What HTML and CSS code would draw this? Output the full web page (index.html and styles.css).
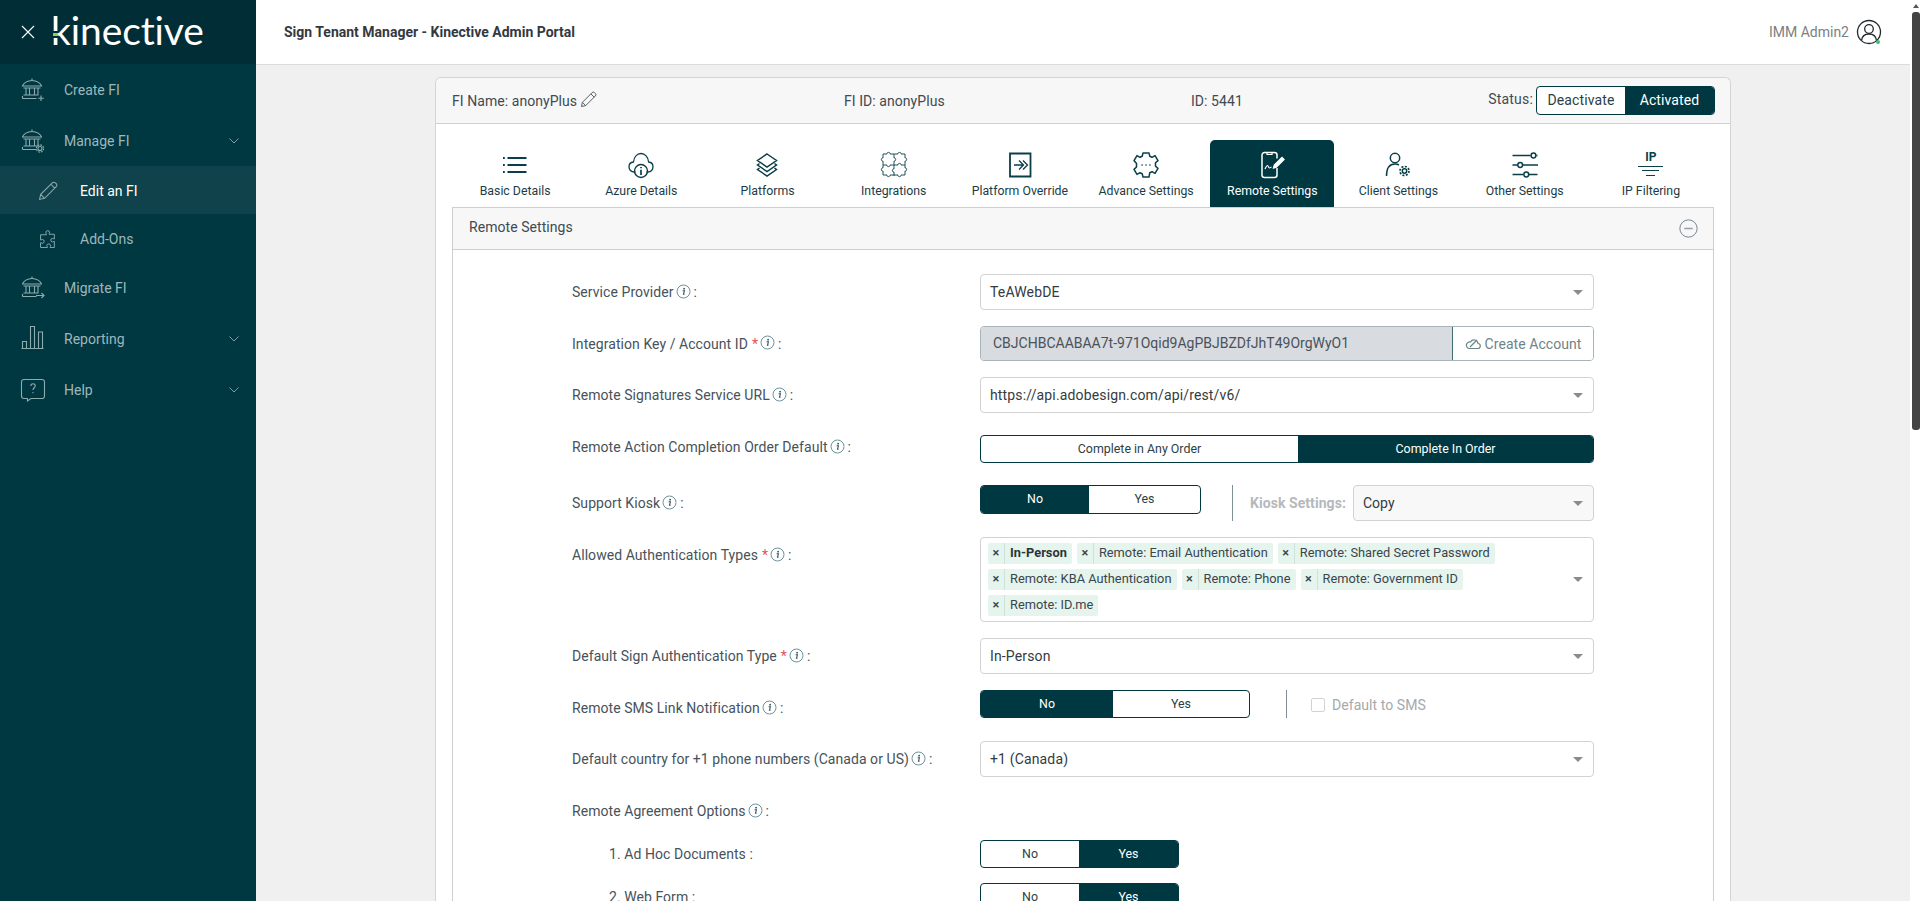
FILE: index.html
```html
<!DOCTYPE html>
<html lang="en">
<head>
<meta charset="utf-8">
<title>Sign Tenant Manager - Kinective Admin Portal</title>
<link rel="stylesheet" href="styles.css">
</head>
<body>
<svg class="defs" width="0" height="0" aria-hidden="true">
  <defs>
    <g id="bank">
      <path d="M1.500 8c.8-3 5-5.500 9.500-5.500S19.700 5 20.500 8zM2.500 10h17M5 10v6.500M8.500 10v6.500M13.500 10v6.500M17 10v6.500M2.500 17h15M1.500 20.500V18M1.500 20.500h14"/>
      <path d="M11 .5v2"/>
    </g>
    <symbol id="info" viewBox="0 0 15 15">
      <circle cx="7.500" cy="7.500" r="6.500" fill="none" stroke="#6d929b" stroke-width="1"/>
      <circle cx="8.100" cy="4.700" r=".9" fill="#33515a"/>
      <path d="M6.600 6.800h1.800l-.9 3.300h1" fill="none" stroke="#33515a" stroke-width="1.100"/>
    </symbol>
    <path id="pencil" d="M2.500 17.500l1-4.500L13.800 2.700a1.900 1.900 0 0 1 2.700 0l.8.800a1.900 1.900 0 0 1 0 2.700L7 16.500zM3.500 13L7 16.500M12.500 4l3.500 3.500"/>
  </defs>
</svg>
<div class="app">
  <aside class="sidebar">
    <div class="brand">
      <svg class="close" viewBox="0 0 14 14"><path d="M1 1l12 12M13 1L1 13"/></svg>
      <span class="logo">kinective<i class="logo-dot"></i></span>
    </div>
    <nav class="nav">
      <a class="nav-item">
        <svg class="nav-icon" viewBox="0 0 24 24"><use href="#bank"/><path d="M20 17.500v5.500M17.200 20.300h5.600"/></svg>
        <span class="nav-text">Create FI</span>
      </a>
      <a class="nav-item">
        <svg class="nav-icon" viewBox="0 0 24 24"><use href="#bank"/><circle cx="19" cy="19.500" r="2"/><circle cx="19" cy="19.500" r="3.600" stroke-dasharray="1.800 1"/></svg>
        <span class="nav-text">Manage FI</span>
        <svg class="chev" viewBox="0 0 10 6"><path d="M.5.500L5 5 9.500.500"/></svg>
      </a>
      <a class="nav-sub active">
        <svg class="sub-icon" viewBox="2 2 16 16"><use href="#pencil"/></svg>
        <span>Edit an FI</span>
      </a>
      <a class="nav-sub">
        <svg class="sub-icon" viewBox="2.500 .5 15 17"><path d="M8 2.500c0-1.800 3.500-1.800 3.500 0 0 1-.5 1.300-.5 2h5v4.500c-.8 0-1.200-.6-2-.6-1.800 0-1.800 3.400 0 3.400.8 0 1.200-.6 2-.6V17h-4c0-.8.500-1.200.5-2 0-1.800-3.600-1.800-3.600 0 0 .8.600 1.200.6 2H3v-4.500c.8 0 1.200.5 2 .5 1.800 0 1.800-3.600 0-3.600-.8 0-1.200.6-2 .6V5h5.500c0-.9-.5-1.500-.5-2.500z"/></svg>
        <span>Add-Ons</span>
      </a>
      <a class="nav-item">
        <svg class="nav-icon" viewBox="0 0 24 24"><use href="#bank"/><path d="M15 19.500h8M20.500 17l2.500 2.500-2.500 2.500"/></svg>
        <span class="nav-text">Migrate FI</span>
      </a>
      <a class="nav-item">
        <svg class="nav-icon" viewBox="0 0 24 24"><path d="M.5 22.500h22M1.500 22V15.500h4V22M9.500 22V.5h4V22M17.500 22V6h4V22" transform="translate(0 -1)"/></svg>
        <span class="nav-text">Reporting</span>
        <svg class="chev" viewBox="0 0 10 6"><path d="M.5.500L5 5 9.500.500"/></svg>
      </a>
      <a class="nav-item">
        <svg class="nav-icon" viewBox="0 0 24 24"><path d="M3 1.500h18a2.500 2.500 0 0 1 2.500 2.500v14a2.500 2.500 0 0 1-2.500 2.500H10l-3.500 2.500V20.500H3A2.500 2.500 0 0 1 .5 18V4A2.500 2.500 0 0 1 3 1.500z"/><path d="M9.800 8c0-3 4.400-3 4.400 0 0 1.800-2.200 1.800-2.200 4M12 14v1.200"/></svg>
        <span class="nav-text">Help</span>
        <svg class="chev" viewBox="0 0 10 6"><path d="M.5.500L5 5 9.500.500"/></svg>
      </a>
    </nav>
  </aside>

  <div class="main">
    <header class="topbar">
      <h1 class="title">Sign Tenant Manager - Kinective Admin Portal</h1>
      <div class="user">
        <span class="user-name">IMM Admin2</span>
        <svg class="user-icon" viewBox="0 0 26 26"><circle cx="13" cy="13" r="11.500"/><circle cx="13" cy="10" r="4.300"/><path d="M5.500 21.500c.5-4 3.500-6.500 7.500-6.500s7 2.500 7.500 6.500"/><circle class="user-dot" cx="22" cy="23" r="2"/></svg>
      </div>
    </header>

    <div class="content">
      <section class="card">
        <div class="card-head">
          <div class="fi-name">FI Name: anonyPlus <svg class="head-pencil" viewBox="2 2 16 16"><use href="#pencil"/></svg></div>
          <div>FI ID: anonyPlus</div>
          <div>ID: 5441</div>
          <div class="status">
            <span class="status-label">Status:</span>
            <div class="toggle toggle-status"><span class="tbtn">Deactivate</span><span class="tbtn on">Activated</span></div>
          </div>
        </div>

        <div class="card-body">
          <div class="tabs">
            <a class="tab">
              <svg class="tab-icon" viewBox="0 0 28 28"><path d="M6.500 7h19M6.500 14h19M6.500 21h19" stroke-width="1.800"/><path d="M2 7h1.800M2 14h1.800M2 21h1.800" stroke-width="1.800"/></svg>
              <span>Basic Details</span>
            </a>
            <a class="tab">
              <svg class="tab-icon" viewBox="0 0 28 28"><path d="M8.500 21H7.200C4 21 2 18.500 2 16c0-2.800 2-4.800 4.500-5C7 6 10 2.500 14 2.500s7.200 3.500 7.600 8.500c2.500.2 4.400 2.200 4.400 5 0 2.500-2 5-5 5h-1.500" stroke-width="1.300"/><circle cx="14" cy="20" r="6.500" stroke-width="1.400"/><path d="M14 18.700V24M14 16v1.300" stroke-width="1.700"/></svg>
              <span>Azure Details</span>
            </a>
            <a class="tab">
              <svg class="tab-icon" viewBox="0 0 28 28"><path d="M14 3l9.500 6.500L14 16 4.500 9.500zM6.500 12.500l-2 1.500L14 20.500 23.500 14l-2-1.500M6.500 17l-2 1.500L14 25l9.500-6.500-2-1.500" stroke-width="1.500"/></svg>
              <span>Platforms</span>
            </a>
            <a class="tab">
              <svg class="tab-icon tab-thin" viewBox="0 0 28 28"><path d="M3 3h4c-.6-2.200 3.600-2.200 3 0h4h4c-.6-2.200 3.600-2.200 3 0h4v4c2.200-.6 2.200 3.600 0 3v3h0v4c2.200-.6 2.200 3.600 0 3v4h-4c.6 2.200-3.600 2.200-3 0h-4h-4c.6 2.200-3.600 2.200-3 0H3v-4c-2.200.6-2.200-3.600 0-3v-4h0v-3c-2.200.6-2.200-3.600 0-3z"/><path d="M14 3v4c2.200-.6 2.200 3.600 0 3v4h0v4c-2.200-.6-2.200 3.600 0 3v4M3 14h4c-.6 2.200 3.600 2.200 3 0h4h4c-.6-2.200 3.600-2.200 3 0h4"/></svg>
              <span>Integrations</span>
            </a>
            <a class="tab">
              <svg class="tab-icon" viewBox="0 0 28 28"><path d="M4 2.500h20.500v23H4z" stroke-width="1.800"/><path d="M8 14h9M13 9.500l4.500 4.500-4.500 4.500M17 9.500l4.500 4.500-4.500 4.500" stroke-width="1.300"/></svg>
              <span>Platform Override</span>
            </a>
            <a class="tab">
              <svg class="tab-icon" viewBox="0 0 28 28"><path d="M11 2h6l.8 3.300 2.200 1 3-1.700 3 5-2.500 2.200v3.400L26 17.400l-3 5-3-1.700-2.200 1L17 26h-6l-.8-3.300-2.200-1-3 1.700-3-5L4.500 16v-3.400L2 9.600l3-5 3 1.700 2.200-1z" stroke-width="1.500" stroke-linejoin="round"/><path d="M9.500 14h1.200M13.400 14h1.200M17.300 14h1.200" stroke-width="1.300"/></svg>
              <span>Advance Settings</span>
            </a>
            <a class="tab tab-active">
              <svg class="tab-icon" viewBox="0 0 28 28"><path d="M19 7.500V4a2.500 2.500 0 0 0-2.500-2.500h-10A2.500 2.500 0 0 0 4 4v20a2.500 2.500 0 0 0 2.500 2.500h10A2.500 2.500 0 0 0 19 24v-7" stroke-width="1.500"/><path d="M9 2v1.500h5V2" stroke-width="1.200"/><path d="M7 18c1-2 1.500-3.500 2.500-3.500 1 0 .8 2.500 2 2.500.8 0 1-.8 2-.8" stroke-width="1.200"/><path class="pen-fill" d="M15.500 17l.8-3L24 6.500l2 2-7.600 7.700z" stroke-width="1.300"/></svg>
              <span>Remote Settings</span>
            </a>
            <a class="tab">
              <svg class="tab-icon" viewBox="0 0 28 28"><circle cx="11" cy="7" r="4.700" stroke-width="1.500"/><path d="M2.500 25c0-8 3-12 8.500-12 1.500 0 2.800.3 4 1" stroke-width="1.500"/><circle cx="20.500" cy="20" r="2.200" stroke-width="1.500"/><circle cx="20.500" cy="20" r="4.500" stroke-width="1.700" stroke-dasharray="2 1.500"/></svg>
              <span>Client Settings</span>
            </a>
            <a class="tab">
              <svg class="tab-icon" viewBox="0 0 28 28"><path d="M1.500 4.500h18M25.500 4.500h1M1.500 14h5M12 14h15M1.500 23.500h11M18 23.500h8.500" stroke-width="1.700"/><circle cx="22.500" cy="4.500" r="2.400" stroke-width="1.500"/><circle cx="9.200" cy="14" r="2.400" stroke-width="1.500"/><circle cx="15.300" cy="23.500" r="2.400" stroke-width="1.500"/></svg>
              <span>Other Settings</span>
            </a>
            <a class="tab">
              <div class="ip-icon"><b class="ip-text">IP</b><i class="ip-l1"></i><i class="ip-l2"></i><i class="ip-l3"></i></div>
              <span>IP Filtering</span>
            </a>
          </div>

          <div class="panel">
            <div class="panel-head">
              <span>Remote Settings</span>
              <svg class="collapse" viewBox="0 0 20 20"><circle cx="10" cy="10" r="9.100"/><path class="collapse-bar" d="M5.500 10h9"/></svg>
            </div>
            <div class="panel-body">
              <div class="row">
                <div class="lbl">Service Provider<svg class="info"><use href="#info"/></svg> :</div>
                <div class="select"><span>TeAWebDE</span><i class="caret"></i></div>
              </div>
              <div class="row">
                <div class="lbl lbl-key">Integration Key / Account ID <em>*</em><svg class="info"><use href="#info"/></svg> :</div>
                <div class="keyfield">
                  <div class="key-value">CBJCHBCAABAA7t-971Oqid9AgPBJBZDfJhT49OrgWyO1</div>
                  <div class="key-btn">
                    <svg class="key-icon" viewBox="0 0 16 12"><path d="M4 10.500h8.500a2.500 2.500 0 0 0 .5-5A4 4 0 0 0 5.500 4 3.300 3.300 0 0 0 4 10.500zM5 9l7-7"/></svg>
                    Create Account
                  </div>
                </div>
              </div>
              <div class="row">
                <div class="lbl">Remote Signatures Service URL<svg class="info"><use href="#info"/></svg> :</div>
                <div class="select"><span>https://api.adobesign.com/api/rest/v6/</span><i class="caret"></i></div>
              </div>
              <div class="row row-action">
                <div class="lbl">Remote Action Completion Order Default<svg class="info"><use href="#info"/></svg> :</div>
                <div class="toggle toggle-action"><span class="tbtn">Complete in Any Order</span><span class="tbtn on">Complete In Order</span></div>
              </div>
              <div class="row">
                <div class="lbl">Support Kiosk<svg class="info"><use href="#info"/></svg> :</div>
                <div class="inline">
                  <div class="toggle toggle-kiosk"><span class="tbtn on">No</span><span class="tbtn">Yes</span></div>
                  <i class="sep sep-kiosk"></i>
                  <span class="kiosk-label">Kiosk Settings:</span>
                  <div class="select select-kiosk"><span>Copy</span><i class="caret"></i></div>
                </div>
              </div>
              <div class="row">
                <div class="lbl">Allowed Authentication Types <em>*</em><svg class="info"><use href="#info"/></svg> :</div>
                <div class="tagbox">
                  <div class="tags">
                    <span class="tag"><i class="tag-x">×</i><b class="tag-text tag-strong">In-Person</b></span>
                    <span class="tag"><i class="tag-x">×</i><span class="tag-text">Remote: Email Authentication</span></span>
                    <span class="tag"><i class="tag-x">×</i><span class="tag-text">Remote: Shared Secret Password</span></span>
                    <span class="tag"><i class="tag-x">×</i><span class="tag-text">Remote: KBA Authentication</span></span>
                    <span class="tag"><i class="tag-x">×</i><span class="tag-text">Remote: Phone</span></span>
                    <span class="tag"><i class="tag-x">×</i><span class="tag-text">Remote: Government ID</span></span>
                    <span class="tag"><i class="tag-x">×</i><span class="tag-text">Remote: ID.me</span></span>
                  </div>
                  <i class="caret"></i>
                </div>
              </div>
              <div class="row">
                <div class="lbl">Default Sign Authentication Type <em>*</em><svg class="info"><use href="#info"/></svg> :</div>
                <div class="select"><span>In-Person</span><i class="caret"></i></div>
              </div>
              <div class="row row-sms">
                <div class="lbl">Remote SMS Link Notification<svg class="info"><use href="#info"/></svg> :</div>
                <div class="inline">
                  <div class="toggle toggle-sms"><span class="tbtn on">No</span><span class="tbtn">Yes</span></div>
                  <i class="sep sep-sms"></i>
                  <i class="check"></i>
                  <span class="check-label">Default to SMS</span>
                </div>
              </div>
              <div class="row">
                <div class="lbl">Default country for +1 phone numbers (Canada or US)<svg class="info"><use href="#info"/></svg> :</div>
                <div class="select"><span>+1 (Canada)</span><i class="caret"></i></div>
              </div>
              <div class="row row-tight">
                <div class="lbl">Remote Agreement Options<svg class="info"><use href="#info"/></svg> :</div>
              </div>
              <div class="row row-tight">
                <div class="lbl lbl-sub">1. Ad Hoc Documents :</div>
                <div class="toggle toggle-sub"><span class="tbtn">No</span><span class="tbtn on">Yes</span></div>
              </div>
              <div class="row row-tight">
                <div class="lbl lbl-sub">2. Web Form :</div>
                <div class="toggle toggle-sub"><span class="tbtn">No</span><span class="tbtn on">Yes</span></div>
              </div>
            </div>
          </div>
        </div>
      </section>
    </div>
  </div>

  <div class="scrollbar">
    <i class="scroll-up"></i>
    <i class="scroll-thumb"></i>
  </div>
</div>
</body>
</html>
```
FILE: styles.css
```css
* { box-sizing: border-box; }
html, body { margin: 0; height: 100%; overflow: hidden; }
body { font-family: Roboto, "Liberation Sans", sans-serif; font-size: 14px; color: #3f4a52; background: #f0f0f0; }
.defs { position: absolute; }
svg { display: block; }
em { font-style: normal; color: #e8505b; }

.app { display: flex; height: 901px; overflow: hidden; }

/* Sidebar */
.sidebar { width: 256px; flex: none; background: #003842; color: #9db7ba; }
.brand { height: 64px; background: #012d36; display: flex; align-items: center; padding-left: 21px; }
.close { width: 14px; height: 14px; fill: none; stroke: #fff; stroke-width: 1.1; }
.logo { position: relative; margin-left: 16px; margin-top: -4px; font-family: Lato, sans-serif; font-weight: 400; font-size: 39px; line-height: 40px; letter-spacing: -.1px; color: #fff; }
.logo-dot { position: absolute; left: 2px; top: 21px; width: 5px; height: 7px; background: #8fd14f; border-top: 2px solid #012d36; border-bottom: 2px solid #012d36; }
.nav-item { height: 51px; display: flex; align-items: center; padding-left: 21px; }
.nav-icon { width: 24px; height: 24px; flex: none; fill: none; stroke: #8dabaf; stroke-width: 1.1; overflow: visible; }
.nav-text { margin-left: 19px; flex: 1; }
.chev { width: 10px; height: 6px; flex: none; margin-right: 17px; fill: none; stroke: #7f9ea2; stroke-width: 1; }
.nav-sub { height: 48px; display: flex; align-items: center; padding: 2px 0 0 39px; }
.nav-sub.active { background: #0f424a; color: #fff; }
.sub-icon { width: 18px; height: 18px; flex: none; margin-right: 23px; fill: none; stroke: #8dabaf; stroke-width: .9; overflow: visible; }

/* Main */
.main { flex: 1; min-width: 0; display: flex; flex-direction: column; }
.topbar { height: 65px; flex: none; background: #fff; border-bottom: 1px solid #dcdcdf; display: flex; align-items: center; justify-content: space-between; padding: 0 28px 1px 28px; }
.title { margin: 0; font-size: 14px; font-weight: 700; line-height: 18px; color: #33393f; }
.user { display: flex; align-items: center; gap: 7px; }
.user-name { color: #7b7f83; }
.user-icon { width: 26px; height: 26px; fill: none; stroke: #23282c; stroke-width: 1.300; overflow: visible; }
.user-dot { fill: #3fbf6f; stroke: none; }
.content { flex: 1; min-height: 0; padding: 12px 0 0 179px; overflow: hidden; }

/* Card */
.card { width: 1296px; background: #fff; border: 1px solid #d4d4d4; border-bottom: 0; border-radius: 6px 6px 0 0; letter-spacing: .06px; }
.card-head { height: 46px; background: #f7f7f7; border-bottom: 1px solid #d0d0d0; border-radius: 6px 6px 0 0; display: grid; grid-template-columns: 392px 347px 1fr auto; align-items: center; padding: 0 15px 0 16px; color: #3f4a52; }
.fi-name { display: flex; align-items: center; gap: 4px; }
.head-pencil { width: 15px; height: 15px; fill: none; stroke: #4d565d; stroke-width: 1; margin-top: -2px; overflow: visible; }
.status { display: flex; align-items: center; gap: 3px; }
.status-label { margin-top: -4px; letter-spacing: .2px; }
.card-body { padding: 16px 16px 0; }

/* Tabs */
.tabs { display: grid; grid-template-columns: repeat(10, 1fr); }
.tab { height: 67px; margin: 0 1px; display: flex; flex-direction: column; align-items: center; padding-top: 11px; font-size: 12.300px; letter-spacing: 0; color: #1d3b44; border-radius: 5px 5px 0 0; }
.tab span { margin-top: 4px; line-height: 16px; white-space: nowrap; }
.tab-icon { width: 28px; height: 28px; flex: none; fill: none; stroke: #0b3f48; stroke-width: 1.500; }
.tab-thin { stroke-width: .9; }
.tab-active { background: #003842; color: #fff; }
.tab-active .tab-icon { stroke: #fff; }
.pen-fill { fill: #fff; }
.ip-icon { width: 28px; height: 28px; display: flex; flex-direction: column; align-items: center; }
.ip-text { font-size: 12px; line-height: 13px; font-weight: 700; color: #0b3f48; }
.ip-l1, .ip-l2, .ip-l3 { display: block; height: 1.500px; background: #0b3f48; margin-bottom: 4px; }
.ip-l1 { width: 25px; margin-top: 2px; }
.ip-l2 { width: 17px; }
.ip-l3 { width: 9px; }

/* Panel */
.panel { border: 1px solid #cfcfcf; border-bottom: 0; height: 700px; }
.panel-head { height: 42px; background: #f7f7f7; border-bottom: 1px solid #cfcfcf; display: flex; align-items: center; justify-content: space-between; padding: 0 15px 0 16px; color: #3f4a52; }
.panel-head span { margin-top: -3px; }
.collapse { width: 19px; height: 19px; fill: none; stroke: #6f8088; stroke-width: 1; }
.collapse-bar { stroke: #9a9fa8; stroke-width: 1.600; }
.panel-body { padding: 24px 0 0 119px; }

/* Rows */
.row { display: grid; grid-template-columns: 408px 614px; margin-bottom: 16px; min-height: 35px; }
.row-action { margin-bottom: 20px; }
.row-action .toggle { margin-top: 6px; }
.row-sms { margin-bottom: 15px; }
.row-tight { margin-bottom: 7px; min-height: 36px; }
.row-tight .toggle { margin-top: 4px; }
.lbl { color: #47525a; white-space: nowrap; display: flex; align-items: center; height: 36px; }
.lbl-key { height: 35px; }
.lbl em { margin-left: 4px; }
.lbl-sub { padding-left: 37px; }
.info { width: 15px; height: 15px; margin: -2px 3px 0 2px; flex: none; }

.select { height: 36px; background: #fff; border: 1px solid #d2d2d2; border-radius: 4px; display: flex; align-items: center; justify-content: space-between; padding: 0 10px 0 9px; color: #343b41; letter-spacing: .15px; }
.caret { display: block; flex: none; width: 0; height: 0; border-left: 5px solid transparent; border-right: 5px solid transparent; border-top: 5px solid #8b8b8b; }
.keyfield { height: 35px; display: flex; border: 1px solid #a9b4b8; border-radius: 4px; overflow: hidden; }
.key-value { flex: 1; background: #d8dbe0; line-height: 33px; padding-left: 12px; color: #4a525a; letter-spacing: 0; }
.key-btn { width: 141px; flex: none; border-left: 1px solid #3f6e76; display: flex; align-items: center; justify-content: center; gap: 4px; color: #6d8488; background: #fff; }
.key-icon { width: 16px; height: 12px; fill: none; stroke: #6d8488; stroke-width: 1.200; }

/* Toggles */
.toggle { display: grid; height: 28px; background: #fff; border: 1px solid #003842; border-radius: 4px; overflow: hidden; font-size: 12.400px; letter-spacing: 0; color: #2c3f46; }
.tbtn { display: flex; align-items: center; justify-content: center; padding-bottom: 1px; }
.tbtn.on { background: #003842; color: #fff; }
.toggle-status { height: 29px; width: 179px; grid-template-columns: 88px 1fr; font-size: 14px; letter-spacing: .12px; }
.toggle-action { width: 614px; grid-template-columns: 317px 1fr; }
.toggle-kiosk { width: 221px; height: 29px; grid-template-columns: 108px 1fr; }
.toggle-kiosk .tbtn { padding-bottom: 3px; }
.toggle-sms { width: 270px; grid-template-columns: 132px 1fr; }
.toggle-sub { width: 199px; grid-template-columns: 98px 1fr; }

.inline { display: flex; align-items: flex-start; height: 36px; }
.sep { display: block; width: 1px; background: #7f9095; flex: none; }
.sep-kiosk { height: 36px; margin: 0 17px 0 31px; }
.sep-sms { height: 28px; margin: 0 24px 0 36px; }
.kiosk-label { line-height: 36px; font-weight: 700; color: #b4b9bd; width: 103px; flex: none; }
.select-kiosk { width: 241px; background: #f8f8f8; letter-spacing: 0; }
.check { display: block; width: 14px; height: 14px; margin-top: 8px; flex: none; border: 1px solid #d0d3d6; border-radius: 2px; background: #fff; }
.check-label { margin-left: 7px; line-height: 30px; color: #a4a9ad; }

/* Tag box */
.tagbox { height: 85px; background: #fff; border: 1px solid #d2d2d2; border-radius: 4px; display: flex; align-items: center; justify-content: space-between; padding: 0 10px 0 7px; }
.tags { width: 560px; display: flex; flex-wrap: wrap; gap: 5px; }
.tag { height: 21px; display: flex; background: #e6f4ee; border-radius: 2px; font-size: 12.800px; line-height: 20px; letter-spacing: .02px; color: #3a454c; }
.tag-x { width: 17px; border-right: 1px solid #cfe2da; text-align: center; font-style: normal; font-weight: 500; color: #3a454c; }
.tag-text { padding: 0 5px; white-space: nowrap; }
.tag-strong { font-weight: 700; color: #2c343a; }

/* Scrollbar */
.scrollbar { width: 10px; flex: none; background: #fff; position: relative; }
.scroll-up { position: absolute; left: 3px; top: 4px; width: 0; height: 0; border-left: 3px solid transparent; border-right: 3px solid transparent; border-bottom: 4px solid #555; }
.scroll-thumb { position: absolute; left: 2px; right: 0; top: 12px; height: 418px; background: #444; border-radius: 3px; }
```
